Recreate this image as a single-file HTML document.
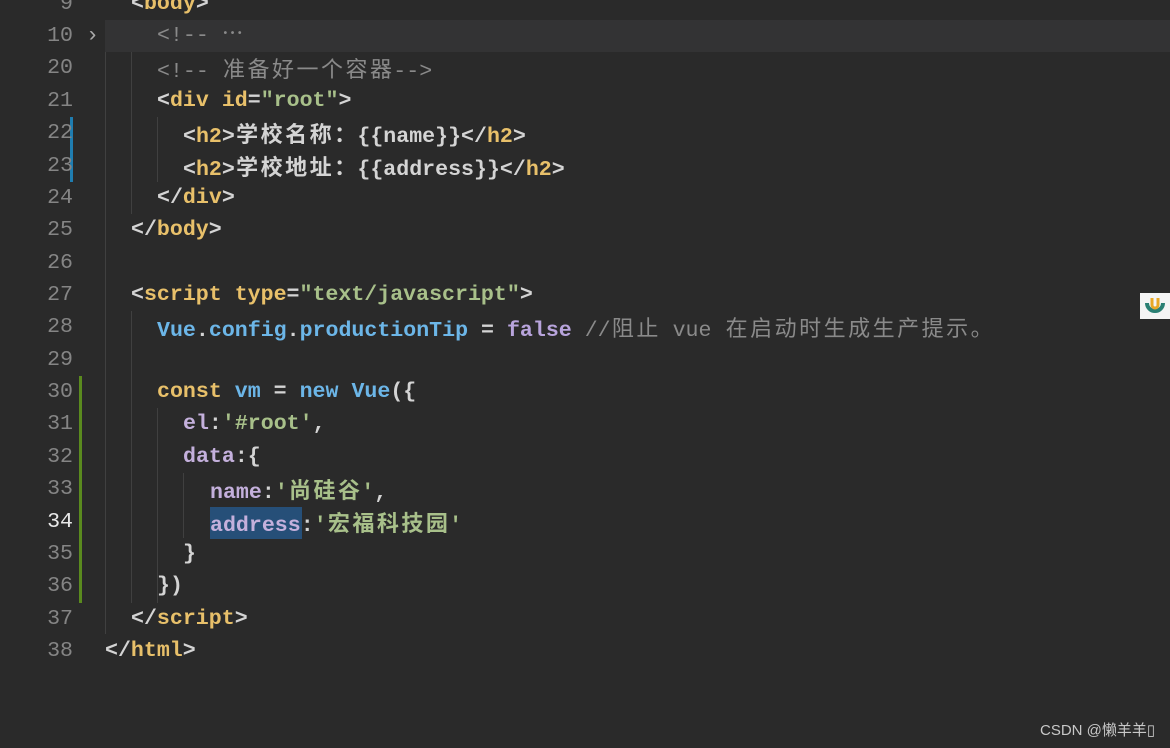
<!DOCTYPE html>
<html><head><meta charset="utf-8"><style>
html,body{margin:0;padding:0}
body{width:1170px;height:748px;background:#2a2a2a;position:relative;overflow:hidden;font-family:"Liberation Mono","Noto Sans CJK SC",monospace;font-weight:bold;font-size:21.6px;color:#d4d4d4}
.ln{position:absolute;left:0;width:73px;text-align:right;color:#858585;font-weight:normal;height:32px;line-height:32px}
.l{position:absolute;height:32px;line-height:32px;white-space:pre}
.c{display:inline-block;width:24.5px;text-align:center;font-family:"Noto Sans CJK SC",sans-serif;font-size:22px;font-weight:bold}
.cm .c{font-weight:normal}
.t{color:#e8c06a}.s{color:#a8c08a}.cm{color:#8a8a8a;font-weight:normal}
.b{color:#6cb6e8}.p{color:#c4b0dc}.k{color:#e8c06a}.f{color:#b8a4dc}.w{color:#e6e6e6}
.g{position:absolute;width:1px;background:#404040}
</style></head><body>
<div style="position:absolute;left:105px;top:20px;width:1065px;height:32px;background:#333334"></div>
<div class="g" style="left:105px;top:52px;height:582px"></div>
<div class="g" style="left:131px;top:52px;height:162px"></div>
<div class="g" style="left:157px;top:117px;height:65px"></div>
<div class="g" style="left:131px;top:311px;height:292px"></div>
<div class="g" style="left:157px;top:408px;height:195px"></div>
<div class="g" style="left:183px;top:473px;height:65px"></div>
<div style="position:absolute;left:70px;top:117px;width:3px;height:65px;background:#1f7db0"></div>
<div style="position:absolute;left:79px;top:376px;width:3px;height:227px;background:#5a8a1e"></div>
<div style="position:absolute;left:210px;top:507px;width:92px;height:32px;background:#264f78"></div>

<div class="ln" style="top:-12px">9</div>
<div class="ln" style="top:20px">10</div><div style="position:absolute;left:86px;top:20px;line-height:32px;color:#aaa;font-weight:normal">›</div>
<div class="ln" style="top:52px">20</div><div class="ln" style="top:85px">21</div><div class="ln" style="top:117px">22</div><div class="ln" style="top:150px">23</div><div class="ln" style="top:182px">24</div><div class="ln" style="top:214px">25</div><div class="ln" style="top:247px">26</div><div class="ln" style="top:279px">27</div><div class="ln" style="top:311px">28</div><div class="ln" style="top:344px">29</div><div class="ln" style="top:376px">30</div><div class="ln" style="top:408px">31</div><div class="ln" style="top:441px">32</div><div class="ln" style="top:473px">33</div><div class="ln" style="top:506px;color:#e8e8e8">34</div><div class="ln" style="top:538px">35</div><div class="ln" style="top:570px">36</div><div class="ln" style="top:603px">37</div><div class="ln" style="top:635px">38</div>

<div class="l" style="left:131px;top:-12px">&lt;<span class="t">body</span>&gt;</div>
<div class="l cm" style="left:157px;top:20px">&lt;!-- ⋯</div>
<div class="l cm" style="left:157px;top:52px">&lt;!-- <span class="c">准</span><span class="c">备</span><span class="c">好</span><span class="c">一</span><span class="c">个</span><span class="c">容</span><span class="c">器</span>--&gt;</div>
<div class="l" style="left:157px;top:85px">&lt;<span class="t">div</span> <span class="t">id</span>=<span class="s">"root"</span>&gt;</div>
<div class="l" style="left:183px;top:117px">&lt;<span class="t">h2</span>&gt;<span class="c">学</span><span class="c">校</span><span class="c">名</span><span class="c">称</span><span class="c">：</span>{{name}}&lt;/<span class="t">h2</span>&gt;</div>
<div class="l" style="left:183px;top:150px">&lt;<span class="t">h2</span>&gt;<span class="c">学</span><span class="c">校</span><span class="c">地</span><span class="c">址</span><span class="c">：</span>{{address}}&lt;/<span class="t">h2</span>&gt;</div>
<div class="l" style="left:157px;top:182px">&lt;/<span class="t">div</span>&gt;</div>
<div class="l" style="left:131px;top:214px">&lt;/<span class="t">body</span>&gt;</div>
<div class="l" style="left:131px;top:279px">&lt;<span class="t">script</span> <span class="t">type</span>=<span class="s">"text/javascript"</span>&gt;</div>
<div class="l" style="left:157px;top:311px"><span class="b">Vue</span>.<span class="b">config</span>.<span class="b">productionTip</span> = <span class="f">false</span> <span class="cm">//<span class="c">阻</span><span class="c">止</span> vue <span class="c">在</span><span class="c">启</span><span class="c">动</span><span class="c">时</span><span class="c">生</span><span class="c">成</span><span class="c">生</span><span class="c">产</span><span class="c">提</span><span class="c">示</span><span class="c">。</span></span></div>
<div class="l" style="left:157px;top:376px"><span class="k">const</span> <span class="b">vm</span> = <span class="b">new</span> <span class="b">Vue</span>({</div>
<div class="l" style="left:183px;top:408px"><span class="p">el</span>:<span class="s">'#root'</span>,</div>
<div class="l" style="left:183px;top:441px"><span class="p">data</span>:{</div>
<div class="l" style="left:210px;top:473px"><span class="p">name</span>:<span class="s">'<span class="c">尚</span><span class="c">硅</span><span class="c">谷</span>'</span>,</div>
<div class="l" style="left:210px;top:506px"><span class="p">address</span>:<span class="s">'<span class="c">宏</span><span class="c">福</span><span class="c">科</span><span class="c">技</span><span class="c">园</span>'</span></div>
<div class="l" style="left:183px;top:538px">}</div>
<div class="l" style="left:157px;top:570px">})</div>
<div class="l" style="left:131px;top:603px">&lt;/<span class="t">script</span>&gt;</div>
<div class="l" style="left:105px;top:635px">&lt;/<span class="t">html</span>&gt;</div>

<div style="position:absolute;left:1140px;top:293px;width:30px;height:26px;background:#f4f4f4"></div>
<svg style="position:absolute;left:1143px;top:294px" width="24" height="24" viewBox="0 0 24 24"><path d="M4 9 A8 8 0 0 0 20 9" fill="none" stroke="#2a7f73" stroke-width="4"/><path d="M9 4 V11 A3 3 0 0 0 15 11 V4" fill="none" stroke="#e8a825" stroke-width="3"/></svg>
<div style="position:absolute;left:1040px;top:719px;font-family:'Liberation Sans','Noto Sans CJK SC',sans-serif;font-weight:normal;font-size:15px;color:#c8c8c8">CSDN @懒羊羊▯</div>
</body></html>
